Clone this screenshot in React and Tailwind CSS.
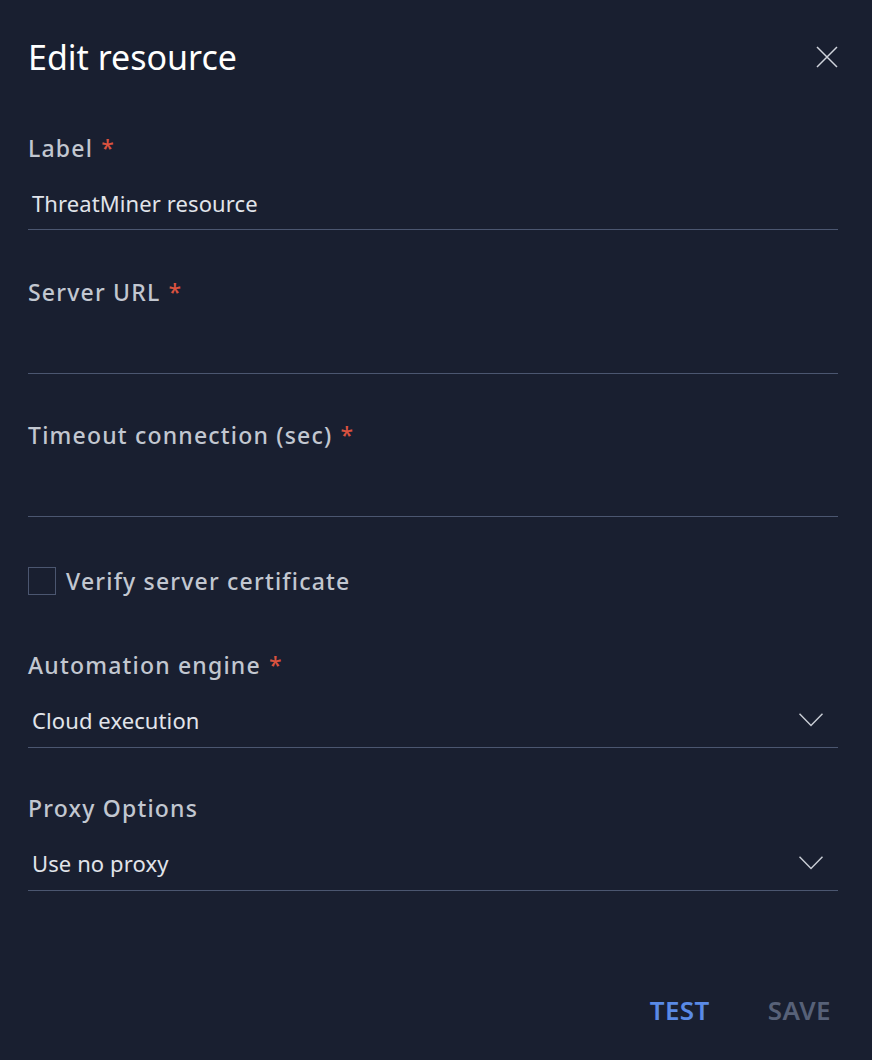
const Label = ({ children, required }) => (
  <div className="h-[28px] flex items-center text-[23px] font-medium text-[#c2c7d0] tracking-[1.2px]">
    {children}
    {required && <span className="ml-[8px] text-[#d9523f]">*</span>}
  </div>
);

const TextField = ({ label, required, value, className = "" }) => (
  <div className={"flex flex-col " + className}>
    <Label required={required}>{label}</Label>
    <div className="h-[68px] flex items-end border-b border-[#4b5670] px-[4px] pb-[13px]">
      <span className="h-[26px] flex items-center text-[22px] text-[#e1e4ea] tracking-[0.1px]">{value}</span>
    </div>
  </div>
);

const SelectField = ({ label, required, value, className = "" }) => (
  <div className={"flex flex-col " + className}>
    <Label required={required}>{label}</Label>
    <div className="h-[69px] flex items-end justify-between border-b border-[#4b5670] pl-[4px] pr-[15px] pb-[14px]">
      <span className="h-[26px] flex items-center text-[22px] text-[#e1e4ea] tracking-[0.1px]">{value}</span>
      <span className="h-[26px] flex items-center">
        <svg width="24" height="14" viewBox="0 0 24 14" fill="none" stroke="#c8ccd4" strokeWidth="1.5">
          <path d="M0.5 0.8L12 12.5L23.5 0.8" />
        </svg>
      </span>
    </div>
  </div>
);

export default function App() {
  return (
    <div className="min-h-screen w-full bg-[#191f30] font-['Noto_Sans','Open_Sans',sans-serif] pl-[28px] pr-[34px] pt-[38px]">
      {/* header */}
      <div className="h-[38px] flex items-center justify-between">
        <h1 className="text-[34px] font-normal text-white">Edit resource</h1>
        <button className="text-[#d0d4dc]">
          <svg width="22" height="22" viewBox="0 0 22 22" fill="none" stroke="currentColor" strokeWidth="1.5">
            <path d="M1 1l20 20M21 1L1 21" />
          </svg>
        </button>
      </div>

      <TextField className="mt-[58px]" label="Label" required value="ThreatMiner resource" />
      <TextField className="mt-[48px]" label="Server URL" required value="" />
      <TextField className="mt-[47px]" label="Timeout connection (sec)" required value="" />

      <label className="mt-[50px] h-[28px] flex items-center gap-[10px]">
        <span className="h-[28px] w-[28px] border border-[#4b5670]" />
        <span className="text-[23px] font-medium text-[#c2c7d0] tracking-[1.2px]">Verify server certificate</span>
      </label>

      <SelectField className="mt-[56px]" label="Automation engine" required value="Cloud execution" />
      <SelectField className="mt-[46px]" label="Proxy Options" value="Use no proxy" />

      <div className="mt-[99px] h-[40px] flex items-center justify-end gap-[58px] pr-[7px]">
        <button className="text-[26px] font-semibold text-[#5a8ae6] tracking-[0.4px]">TEST</button>
        <button className="text-[26px] font-semibold text-[#576178] tracking-[0.4px]">SAVE</button>
      </div>
    </div>
  );
}
